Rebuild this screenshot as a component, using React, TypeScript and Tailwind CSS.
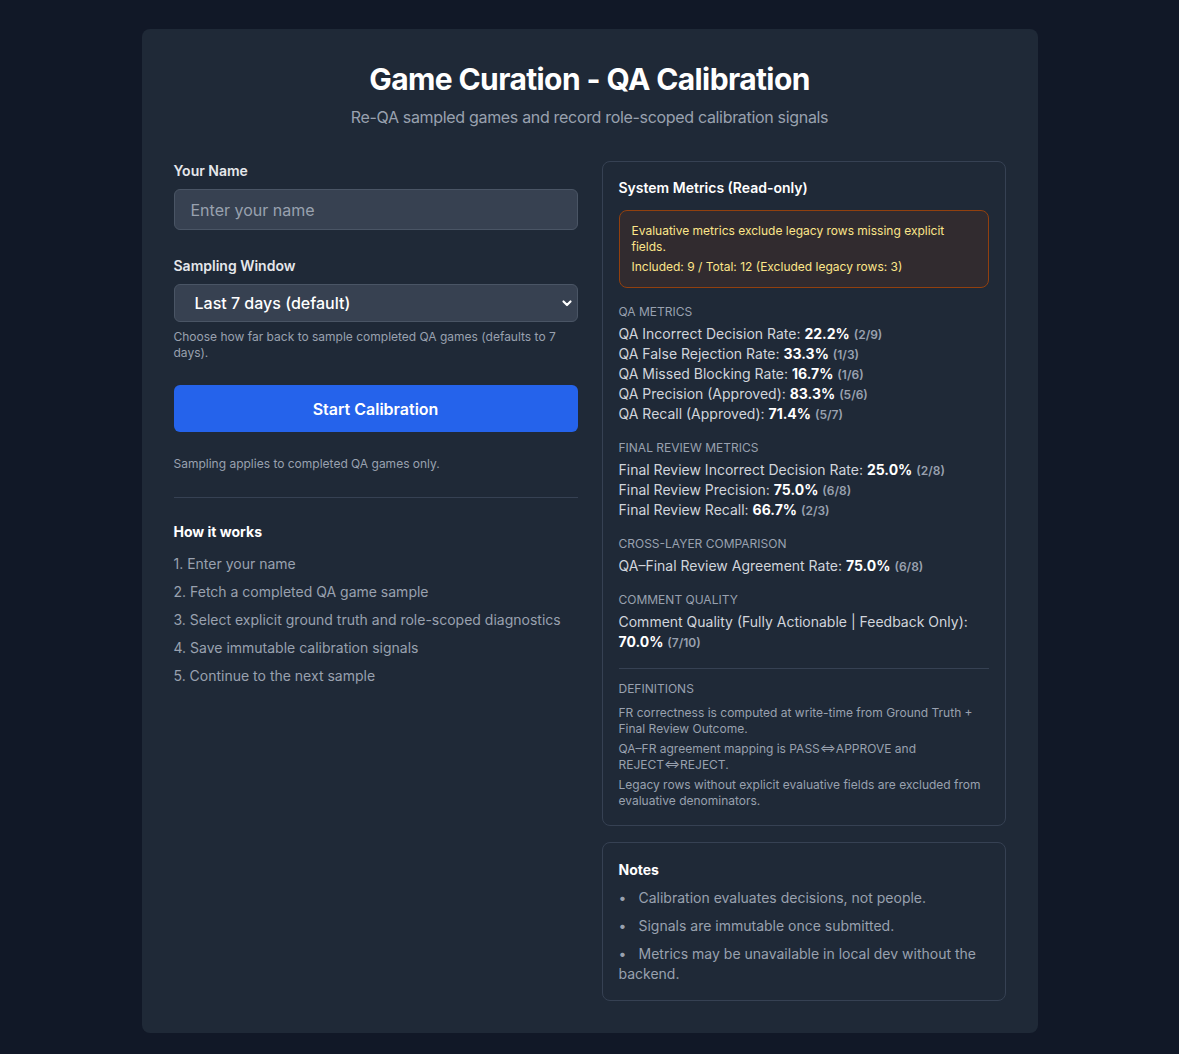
import React from "react";

type Metric = { label: string; value: string; count: string };

const qaMetrics: Metric[] = [
  { label: "QA Incorrect Decision Rate:", value: "22.2%", count: "(2/9)" },
  { label: "QA False Rejection Rate:", value: "33.3%", count: "(1/3)" },
  { label: "QA Missed Blocking Rate:", value: "16.7%", count: "(1/6)" },
  { label: "QA Precision (Approved):", value: "83.3%", count: "(5/6)" },
  { label: "QA Recall (Approved):", value: "71.4%", count: "(5/7)" },
];

const finalReviewMetrics: Metric[] = [
  { label: "Final Review Incorrect Decision Rate:", value: "25.0%", count: "(2/8)" },
  { label: "Final Review Precision:", value: "75.0%", count: "(6/8)" },
  { label: "Final Review Recall:", value: "66.7%", count: "(2/3)" },
];

const crossLayer: Metric[] = [
  { label: "QA\u2013Final Review Agreement Rate:", value: "75.0%", count: "(6/8)" },
];

const commentQuality: Metric[] = [
  { label: "Comment Quality (Fully Actionable | Feedback Only):", value: "70.0%", count: "(7/10)" },
];

const steps = [
  "1. Enter your name",
  "2. Fetch a completed QA game sample",
  "3. Select explicit ground truth and role-scoped diagnostics",
  "4. Save immutable calibration signals",
  "5. Continue to the next sample",
];

const notes = [
  "Calibration evaluates decisions, not people.",
  "Signals are immutable once submitted.",
  "Metrics may be unavailable in local dev without the backend.",
];

function MetricGroup({ title, items, className }: { title: string; items: Metric[]; className?: string }) {
  return (
    <div className={className}>
      <div className="text-xs leading-4 uppercase text-gray-400 mb-1">{title}</div>
      <div>
        {items.map((m) => (
          <div key={m.label} className="text-sm leading-5 text-gray-300">
            {m.label} <span className="font-bold text-white">{m.value}</span>{" "}
            <span className="text-xs font-semibold text-gray-400">{m.count}</span>
          </div>
        ))}
      </div>
    </div>
  );
}

export default function App() {
  return (
    <div
      className="min-h-screen bg-[#111827] pt-[29px] pb-6"
      style={{ fontFamily: "Inter, 'Noto Sans', sans-serif" }}
    >
      <div className="mx-auto w-[896px] rounded-lg bg-[#1f2937] p-8">
        <h1 className="text-center text-3xl leading-9 font-bold text-white tracking-[-0.02em]">
          Game Curation - QA Calibration
        </h1>
        <p className="mt-2 text-center text-base leading-6 text-gray-400 tracking-[-0.02em]">
          Re-QA sampled games and record role-scoped calibration signals
        </p>

        <div className="mt-8 grid grid-cols-2 gap-6 items-start">
          {/* left: start form */}
          <div>
            <label className="block text-sm leading-5 font-semibold text-gray-200">Your Name</label>
            <input
              type="text"
              placeholder="Enter your name"
              className="mt-2 block h-[41px] w-full rounded-md border border-gray-600 bg-[#374151] px-4 text-base text-white placeholder:text-gray-400 outline-none"
            />

            <label className="mt-[26px] block text-sm leading-5 font-semibold text-gray-200">Sampling Window</label>
            <div className="relative mt-2">
              <select className="block h-[38px] w-full appearance-none rounded-md border border-gray-600 bg-[#374151] pl-5 pr-8 text-base font-medium text-white outline-none">
                <option>Last 7 days (default)</option>
                <option>Last 14 days</option>
                <option>Last 30 days</option>
              </select>
              <svg
                className="pointer-events-none absolute right-[5px] top-1/2 -translate-y-1/2"
                width="12"
                height="12"
                viewBox="0 0 12 12"
                fill="none"
                stroke="white"
                strokeWidth="2.2"
                strokeLinecap="round"
                strokeLinejoin="round"
              >
                <path d="M2.5 4.5 6 8l3.5-3.5" />
              </svg>
            </div>
            <p className="mt-[7px] text-xs leading-4 text-gray-400">
              Choose how far back to sample completed QA games (defaults to 7 days).
            </p>

            <button className="mt-6 block h-[47px] w-full rounded-md bg-[#2563eb] text-base font-semibold text-white">
              Start Calibration
            </button>

            <p className="mt-6 text-xs leading-4 text-gray-400">Sampling applies to completed QA games only.</p>

            <div className="mt-[25px] border-t border-gray-700 pt-6">
              <h3 className="text-sm leading-5 font-bold text-white">How it works</h3>
              <ol className="mt-3 space-y-2">
                {steps.map((s) => (
                  <li key={s} className="text-sm leading-5 text-gray-400">
                    {s}
                  </li>
                ))}
              </ol>
            </div>
          </div>

          {/* right: metrics + notes */}
          <div>
            <section className="rounded-lg border border-gray-700 p-4">
              <h3 className="text-sm leading-5 font-semibold text-white">System Metrics (Read-only)</h3>
              <div className="mt-3 rounded-lg border border-[#92400e] bg-[#312b2f] px-3 py-3 text-xs leading-4 text-[#fde68a]">
                <p>Evaluative metrics exclude legacy rows missing explicit fields.</p>
                <p className="mt-1">Included: 9 / Total: 12 (Excluded legacy rows: 3)</p>
              </div>

              <MetricGroup title="QA Metrics" items={qaMetrics} className="mt-4" />
              <MetricGroup title="Final Review Metrics" items={finalReviewMetrics} className="mt-4" />
              <MetricGroup title="Cross-Layer Comparison" items={crossLayer} className="mt-4" />
              <MetricGroup title="Comment Quality" items={commentQuality} className="mt-4" />

              <div className="mt-4 border-t border-gray-700 pt-3">
                <div className="text-xs leading-4 uppercase text-gray-400">Definitions</div>
                <div className="mt-2 space-y-1 text-xs leading-4 text-gray-400">
                  <p>FR correctness is computed at write-time from Ground Truth + Final Review Outcome.</p>
                  <p>QA&ndash;FR agreement mapping is PASS&#8660;APPROVE and REJECT&#8660;REJECT.</p>
                  <p>Legacy rows without explicit evaluative fields are excluded from evaluative denominators.</p>
                </div>
              </div>
            </section>

            <section className="mt-4 rounded-lg border border-gray-700 px-4 pt-[17px] pb-4">
              <h3 className="text-sm leading-5 font-bold text-white">Notes</h3>
              <ul className="mt-2 space-y-2">
                {notes.map((n) => (
                  <li
                    key={n}
                    className="text-sm leading-5 text-gray-400 before:inline-block before:w-5 before:content-['•']"
                  >
                    {n}
                  </li>
                ))}
              </ul>
            </section>
          </div>
        </div>
      </div>
    </div>
  );
}
